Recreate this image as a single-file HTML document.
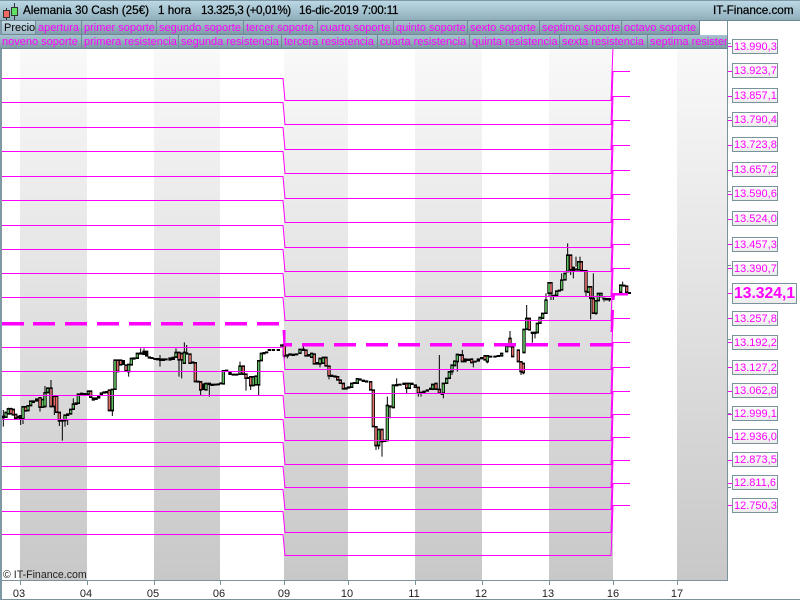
<!DOCTYPE html>
<html><head><meta charset="utf-8"><style>
*{margin:0;padding:0;box-sizing:border-box}
html,body{width:800px;height:600px;overflow:hidden;background:#fff;font-family:"Liberation Sans",sans-serif}
.a{position:absolute;white-space:nowrap}
#hd{left:0;top:0;width:800px;height:21px;background:linear-gradient(#bcd8e5,#8faebb);border-bottom:1px solid #6f8a96;border-top:1px solid #7f98a5}
.h{position:absolute;top:2px;font-size:11.7px;line-height:16px;color:#000;-webkit-text-stroke:.25px #000}
.t{position:absolute;height:14px;background:linear-gradient(#a8c3cf,#7e9aa7);border:1px solid #6f8a96;border-width:0 1px 1px 0;color:#f0f;font-size:11px;line-height:14px;padding-left:2px;overflow:hidden;white-space:nowrap}
.l{position:absolute;left:732px;width:46px;height:15px;border:1px solid #7a929c;background:linear-gradient(#fff,#ececec);color:#f0f;font-size:11px;line-height:14px;padding-left:1px;white-space:nowrap}
.k{position:absolute;left:728px;width:4px;height:1px;background:#f0f}
.d{position:absolute;top:587px;font-size:11px;line-height:14px;color:#222;width:20px;text-align:center}
</style></head><body>
<svg class="a" style="left:0;top:0" width="800" height="600" viewBox="0 0 800 600">
<defs><linearGradient id="b" x1="0" y1="48" x2="0" y2="580" gradientUnits="userSpaceOnUse"><stop offset="0" stop-color="#f9f9f9"/><stop offset="1" stop-color="#c8c8c8"/></linearGradient></defs>
<g fill="url(#b)"><rect x="20" y="48" width="67" height="532"/><rect x="154" y="48" width="66" height="532"/><rect x="284" y="48" width="64" height="532"/><rect x="415" y="48" width="67" height="532"/><rect x="549" y="48" width="64" height="532"/><rect x="677" y="48" width="50" height="532"/></g>

<g transform="translate(0,310) scale(.33333)" fill="none" stroke="#000">
<path stroke-width="3" d="M10 300V350M25 293V312M33 293V300M62 327V345M69 327V342M135 228V250M153 210V234M178 333V348M187 334V392M195 332V350M203 330V345M220 265V282M337 302V318M386 185V200M422 115V128M432 115V122M480 135V170M528 115V127M537 150V200M545 150V205M553 97V127M560 105V128M602 240V255M628 225V260M720 155V168M738 205V242M752 227V240M776 225V255M120 292V305M163 290V315"/>
<path stroke-width="10" d="M10 317V325M54 317V326M62 315V327M100 271V279M110 265V275M187 327V335M228 277V285M245 248V255M255 249V257M280 262V272M288 262V270M296 258V266M304 247V255M312 244V251M320 243V250M370 150V165M402 142V149M422 127V134M432 122V135M440 122V140M448 139V146M456 141V147M465 144V150M473 144V151M482 145V153M490 145V153M498 145V151M510 142V152M520 140V150M560 127V134M578 154V161M594 212V218M610 220V240M628 218V225M636 221V228M645 221V227M655 220V226M663 217V223M680 179V186M690 183V195M700 191V197M710 191V197M746 201V207M792 126V133M800 124V130M808 117V123M820 117V123M835 117V123M203 310V318"/>
<g stroke-linecap="square" stroke-width="10"><path d="M18 310V319M25 299V309M69 293V324M84 290V299M92 276V284M128 271V289M135 251V287M143 237V245M195 318V329M212 301V309M220 285V295M235 255V277M265 246V250M337 241V299M345 153V235M386 166V182M394 148V162M412 133V142M528 130V139M553 130V157M618 223V237M670 185V219M720 171V190M760 203V224M768 201V222M776 155V222M784 133V149"/><path d="M33 299V309M40 301V312M47 316V322M77 293V300M120 266V289M153 237V287M163 261V287M170 261V304M178 310V330M272 246V259M328 243V299M353 153V182M362 153V162M378 168V180M537 130V147M545 133V147M570 135V157M586 161V212M602 218V237M730 171V190M738 195V202M752 203V224"/></g>
<g stroke-width="5"><path stroke="#5fbf60" d="M18 310V319M25 299V309M69 293V324M84 290V299M92 276V284M128 271V289M135 251V287M143 237V245M195 318V329M212 301V309M220 285V295M235 255V277M265 246V250M337 241V299M345 153V235M386 166V182M394 148V162M412 133V142M528 130V139M553 130V157M618 223V237M670 185V219M720 171V190M760 203V224M768 201V222M776 155V222M784 133V149"/><path stroke="#e4706e" d="M33 299V309M40 301V312M47 316V322M77 293V300M120 266V289M153 237V287M163 261V287M170 261V304M178 310V330M272 246V259M328 243V299M353 153V182M362 153V162M378 168V180M537 130V147M545 133V147M570 135V157M586 161V212M602 218V237M730 171V190M738 195V202M752 203V224"/></g>
</g>

<g transform="translate(280,330) scale(.33333)" fill="none" stroke="#000">
<path stroke-width="3" d="M13 78V85M22 80V85M70 45V57M147 138V148M306 335V380M288 347V360M296 347V358M322 200V226M330 233V265M350 145V163M380 175V190M415 190V200M423 190V200M478 75V178M490 190V205M516 125V135M532 95V125M547 60V75M580 98V112M622 95V100M690 3V25M723 125V135M730 128V133M120 102V112"/>
<path stroke-width="10" d="M5 43V50M22 73V80M30 70V77M40 71V78M50 70V76M70 56V63M87 72V80M112 96V104M155 134V141M165 136V143M198 172V179M206 169V176M223 156V162M240 145V152M250 149V156M260 151V158M314 329V336M330 226V233M350 162V169M360 161V167M372 158V165M396 158V165M423 185V191M432 182V189M442 178V185M452 173V180M487 189V195M542 72V78M555 85V97M565 86V93M585 92V98M595 85V95M605 81V88M632 77V83M645 77V83M655 75V81"/>
<g stroke-linecap="square" stroke-width="10"><path d="M60 61V67M95 73V79M120 88V99M130 85V97M215 163V169M232 149V157M296 301V344M322 229V329M340 168V230M388 163V172M458 166V175M490 163V187M500 148V157M508 128V142M516 108V122M524 96V104M532 76V92M622 80V92M665 73V75M680 51V62"/><path d="M13 46V75M78 63V75M103 75V99M138 85V105M147 111V135M173 143V147M181 153V157M190 163V174M272 158V177M280 183V287M288 293V344M306 301V332M380 163V172M406 168V169M415 175V187M468 163V175M478 181V187M547 78V92M575 90V95M615 80V87M690 28V47M698 53V77M715 63V92M723 98V122M730 103V125"/></g>
<g stroke-width="5"><path stroke="#5fbf60" d="M60 61V67M95 73V79M120 88V99M130 85V97M215 163V169M232 149V157M296 301V344M322 229V329M340 168V230M388 163V172M458 166V175M490 163V187M500 148V157M508 128V142M516 108V122M524 96V104M532 76V92M622 80V92M665 73V75M680 51V62"/><path stroke="#e4706e" d="M13 46V75M78 63V75M103 75V99M138 85V105M147 111V135M173 143V147M181 153V157M190 163V174M272 158V177M280 183V287M288 293V344M306 301V332M380 163V172M406 168V169M415 175V187M468 163V175M478 181V187M547 78V92M575 90V95M615 80V87M690 28V47M698 53V77M715 63V92M723 98V122M730 103V125"/></g>
</g>

<g transform="translate(500,230) scale(.33333)" fill="none" stroke="#000">
<path stroke-width="3" d="M80 225V265M97 312V338M105 312V325M138 190V210M147 187V200M153 190V210M160 200V210M185 130V150M203 40V75M212 120V135M220 125V145M228 80V110M240 80V95M258 185V200M272 205V268M280 130V250M288 250V255M312 208V215M328 210V215M368 155V165"/>
<path stroke-width="10" d="M97 305V312M105 305V312M160 194V201M178 179V185M220 110V125M228 115V122M250 120V126M312 203V209M320 204V211M328 204V211M372 164V170M388 186V192"/>
<g stroke-linecap="square" stroke-width="10"><path d="M72 301V365M80 268V295M112 283V305M120 265V277M128 253V262M138 213V247M147 161V187M170 186V194M185 153V177M195 133V147M203 78V122M236 98V117M266 173V184M288 215V247M295 193V209M303 193V197M362 168V184"/><path d="M88 268V297M153 161V187M212 78V117M244 98V119M258 125V182M272 173V202M280 208V247M380 171V184"/></g>
<g stroke-width="5"><path stroke="#5fbf60" d="M72 301V365M80 268V295M112 283V305M120 265V277M128 253V262M138 213V247M147 161V187M170 186V194M185 153V177M195 133V147M203 78V122M236 98V117M266 173V184M288 215V247M295 193V209M303 193V197M362 168V184"/><path stroke="#e4706e" d="M88 268V297M153 161V187M212 78V117M244 98V119M258 125V182M272 173V202M280 208V247M380 171V184"/></g>
</g>

<g fill="none" stroke="#f0f" stroke-width="1">
<path d="M2 78.5H283L285 100.5H611L613 46.5H630"/><path d="M2 102.5H283L285 124.5H611L613 71.5H630"/><path d="M2 127.5H283L285 149.5H611L613 96.5H630"/><path d="M2 151.5H283L285 173.5H611L613 120.5H630"/><path d="M2 176.5H283L285 198.5H611L613 145.5H630"/><path d="M2 200.5H283L285 222.5H611L613 170.5H630"/><path d="M2 225.5H283L285 247.5H611L613 194.5H630"/><path d="M2 249.5H283L285 271.5H611L613 219.5H630"/><path d="M2 273.5H283L285 296.5H611L613 244.5H630"/><path d="M2 297.5H283L285 320.5H611L613 268.5H630"/>
<path d="M2 347.5H283L285 369.5H611L613 318.5H630"/><path d="M2 371.5H283L285 393.5H611L613 342.5H630"/><path d="M2 395.5H283L285 417.5H611L613 367.5H630"/><path d="M2 419.5H283L285 440.5H611L613 391.5H630"/><path d="M2 442.5H283L285 464.5H611L613 414.5H630"/><path d="M2 466.5H283L285 487.5H611L613 437.5H630"/><path d="M2 489.5H283L285 509.5H611L613 460.5H630"/><path d="M2 511.5H283L285 532.5H611L613 483.5H630"/><path d="M2 534.5H283L285 555.5H611L613 505.5H630"/>
</g>
<g fill="#f0f"><rect x="2" y="322" width="22" height="3.5"/><rect x="33" y="322" width="22" height="3.5"/><rect x="65" y="322" width="22" height="3.5"/><rect x="97" y="322" width="22" height="3.5"/><rect x="129" y="322" width="22" height="3.5"/><rect x="161" y="322" width="22" height="3.5"/><rect x="193" y="322" width="22" height="3.5"/><rect x="225" y="322" width="22" height="3.5"/><rect x="257" y="322" width="22" height="3.5"/>
<path d="M282.5 330H285.5V343H292V346.500H283.500Z"/>
<rect x="302" y="343" width="22" height="3.5"/><rect x="334" y="343" width="22" height="3.5"/><rect x="366" y="343" width="22" height="3.5"/><rect x="398" y="343" width="22" height="3.5"/><rect x="430" y="343" width="22" height="3.5"/><rect x="462" y="343" width="22" height="3.5"/><rect x="494" y="343" width="22" height="3.5"/><rect x="526" y="343" width="22" height="3.5"/><rect x="558" y="343" width="22" height="3.5"/><rect x="590" y="343" width="22" height="3.500"/>
<path d="M610.500 332L611.500 310H614L613 332ZM612 300L612.500 293H628V295.500H615L614.500 300Z"/></g>
<rect x="0" y="0" width="2" height="600" fill="#7f98a5"/>
<rect x="2" y="580" width="726" height="1" fill="#7a929c"/>
<rect x="0" y="599" width="800" height="1" fill="#7a929c"/>
<rect x="727" y="20" width="1" height="561" fill="#7a929c"/>
<path stroke="#7a929c" fill="none" d="M20.500 581V585M87.500 581V585M154.500 581V585M220.500 581V585M284.500 581V585M348.500 581V585M415.500 581V585M482.500 581V585M549.500 581V585M613.500 581V585M677.500 581V585M728 43.500H731M728 117.500H731M728 191.500H731M728 265.500H731M728 339.500H731M728 413.500H731M728 487.500H731"/>
</svg>

<div class="a" id="hd">
<svg class="a" style="left:0;top:-1px" width="22" height="21"><path d="M6.500 8V20M14.500 3V20" stroke="#333" fill="none"/><rect x="3.500" y="10.500" width="6" height="7" fill="#ee6a60" stroke="#333"/><rect x="11.500" y="7.500" width="6" height="8" fill="#5fe060" stroke="#333"/></svg>
<span class="h" style="left:23px">Alemania 30 Cash (25€)</span>
<span class="h" style="left:158px">1 hora</span>
<span class="h" style="left:201px;letter-spacing:-.4px">13.325,3 (+0,01%)</span>
<span class="h" style="left:299px;letter-spacing:-.2px">16-dic-2019 7:00:11</span>
<span class="h" style="left:713px">IT-Finance.com</span>
</div>

<div class="t" style="left:2px;top:21px;width:34px;color:#000;background:linear-gradient(#c5dce6,#9db8c4)">Precio</div>
<div class="t" style="left:36px;top:21px;width:46px">apertura</div>
<div class="t" style="left:82px;top:21px;width:75px">primer soporte</div>
<div class="t" style="left:157px;top:21px;width:87px">segundo soporte</div>
<div class="t" style="left:244px;top:21px;width:74px">tercer soporte</div>
<div class="t" style="left:318px;top:21px;width:76px">cuarto soporte</div>
<div class="t" style="left:394px;top:21px;width:74px">quinto soporte</div>
<div class="t" style="left:468px;top:21px;width:72px">sexto soporte</div>
<div class="t" style="left:540px;top:21px;width:82px">septimo soporte</div>
<div class="t" style="left:622px;top:21px;width:78px">octavo soporte</div>
<div class="t" style="left:0;top:35px;width:82px;padding-left:2px">noveno soporte</div>
<div class="t" style="left:82px;top:35px;width:97px">primera resistencia</div>
<div class="t" style="left:179px;top:35px;width:103px">segunda resistencia</div>
<div class="t" style="left:282px;top:35px;width:96px">tercera resistencia</div>
<div class="t" style="left:378px;top:35px;width:92px">cuarta resistencia</div>
<div class="t" style="left:470px;top:35px;width:90px">quinta resistencia</div>
<div class="t" style="left:560px;top:35px;width:88px">sexta resistencia</div>
<div class="t" style="left:648px;top:35px;width:80px">septima resistencia</div>

<div class="k" style="top:46px"></div><div class="l" style="top:39px">13.990,3</div>
<div class="k" style="top:71px"></div><div class="l" style="top:63px">13.923,7</div>
<div class="k" style="top:96px"></div><div class="l" style="top:88px">13.857,1</div>
<div class="k" style="top:120px"></div><div class="l" style="top:112px">13.790,4</div>
<div class="k" style="top:145px"></div><div class="l" style="top:137px">13.723,8</div>
<div class="k" style="top:170px"></div><div class="l" style="top:162px">13.657,2</div>
<div class="k" style="top:194px"></div><div class="l" style="top:186px">13.590,6</div>
<div class="k" style="top:219px"></div><div class="l" style="top:211px">13.524,0</div>
<div class="k" style="top:244px"></div><div class="l" style="top:237px">13.457,3</div>
<div class="k" style="top:268px"></div><div class="l" style="top:261px">13.390,7</div>
<div class="k" style="top:293px"></div><div class="l" style="top:283px;width:65px;height:21px;font-size:15.700px;font-weight:bold;line-height:19px;padding-left:1px">13.324,1</div>
<div class="k" style="top:318px"></div><div class="l" style="top:311px">13.257,8</div>
<div class="k" style="top:342px"></div><div class="l" style="top:335px">13.192,2</div>
<div class="k" style="top:367px"></div><div class="l" style="top:360px">13.127,2</div>
<div class="k" style="top:391px"></div><div class="l" style="top:383px">13.062,8</div>
<div class="k" style="top:414px"></div><div class="l" style="top:406px">12.999,1</div>
<div class="k" style="top:437px"></div><div class="l" style="top:429px">12.936,0</div>
<div class="k" style="top:460px"></div><div class="l" style="top:452px">12.873,5</div>
<div class="k" style="top:483px"></div><div class="l" style="top:475px">12.811,6</div>
<div class="k" style="top:505px"></div><div class="l" style="top:498px">12.750,3</div>

<div class="a" style="left:3px;top:568px;font-size:10.600px;line-height:14px;color:#222">© IT-Finance.com</div>
<div class="d" style="left:9px">03</div><div class="d" style="left:76px">04</div><div class="d" style="left:143px">05</div><div class="d" style="left:209px">06</div><div class="d" style="left:274px">09</div><div class="d" style="left:337px">10</div><div class="d" style="left:404px">11</div><div class="d" style="left:471px">12</div><div class="d" style="left:538px">13</div><div class="d" style="left:603px">16</div><div class="d" style="left:667px">17</div>
</body></html>
